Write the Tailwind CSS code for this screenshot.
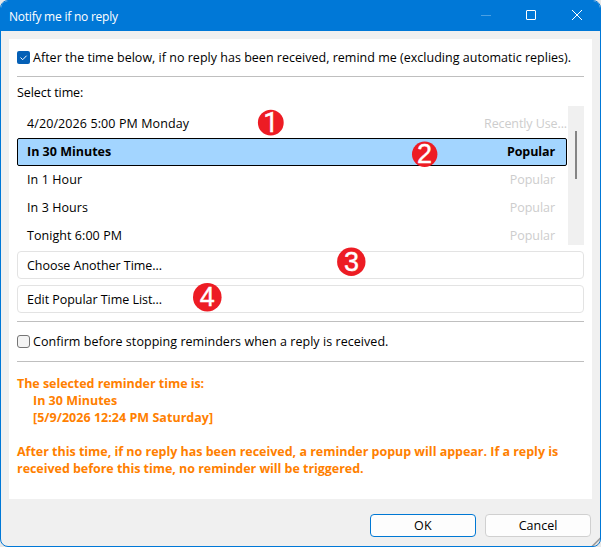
<!DOCTYPE html>
<html lang="en">
<head>
<meta charset="utf-8">
<title>Notify me if no reply</title>
<script src="https://cdn.jsdelivr.net/npm/@tailwindcss/browser@4"></script>
</head>
<body class="bg-[#e8e8e8] overflow-hidden">
<div class="relative flex h-[547px] w-[601px] flex-col overflow-hidden rounded-[8px] border border-[#0078d7] bg-[#f0f0f0] font-['Open_Sans','Noto_Sans',sans-serif] text-[12.5px] leading-[17px] text-black">
  <header class="flex h-[30px] shrink-0 items-center justify-between bg-[#0078d7] pl-2 text-white">
    <h1 class="text-[12px] tracking-[-0.23px]">Notify me if no reply</h1>
    <div class="flex">
      <svg class="h-[30px] w-[46px]" viewBox="0 0 46 30" fill="none" stroke="#4ba0e3"><path d="M19 14.5h10"/></svg>
      <svg class="h-[30px] w-[46px]" viewBox="0 0 46 30" fill="none" stroke="white"><rect x="18.5" y="9.5" width="9" height="9" rx="0.5"/></svg>
      <svg class="h-[30px] w-[46px]" viewBox="0 0 46 30" fill="none" stroke="white"><path d="M18 9l10 10M28 9l-10 10"/></svg>
    </div>
  </header>

  <main class="mx-2 mt-2 flex h-[460px] w-[583px] shrink-0 flex-col bg-white pl-2 pr-2">
    <label class="flex h-[37px] shrink-0 items-center gap-[3px]">
      <svg class="size-[13px]" viewBox="0 0 13 13"><rect width="13" height="13" rx="2" fill="#0560b6"/><path d="M3.5 6.6l2.2 2.1L9.6 4.7" fill="none" stroke="white" stroke-width="1"/></svg>
      <span class="whitespace-nowrap tracking-[0.015px]">After the time below, if no reply has been received, remind me (excluding automatic replies).</span>
    </label>
    <div class="h-px shrink-0 bg-[#bfbfbf]"></div>
    <div class="flex h-[29px] shrink-0 items-center pb-[3px] pt-1 tracking-[-0.08px]">Select time:</div>

    <div class="flex h-[139px] shrink-0 justify-between">
      <ul class="w-[550px] pt-1">
        <li class="flex h-7 items-center justify-between pb-[2px] pl-[10px]"><span class="tracking-[0.1px]">4/20/2026 5:00 PM Monday</span><span class="tracking-[-0.1px] text-[#cdcdcd]">Recently Use...</span></li>
        <li class="flex h-7 items-center justify-between rounded-[2px] border border-black bg-[#a3d5ff] pb-[2px] pl-[9px] pr-[11px] font-bold"><span>In 30 Minutes</span><span class="tracking-[-0.1px]">Popular</span></li>
        <li class="flex h-7 items-center justify-between pb-[2px] pl-[10px] pr-3"><span class="tracking-[0.1px]">In 1 Hour</span><span class="tracking-[-0.05px] text-[#cdcdcd]">Popular</span></li>
        <li class="flex h-7 items-center justify-between pb-[2px] pl-[10px] pr-3"><span class="tracking-[0.08px]">In 3 Hours</span><span class="tracking-[-0.05px] text-[#cdcdcd]">Popular</span></li>
        <li class="flex h-7 items-center justify-between pb-[2px] pl-[10px] pr-3"><span class="tracking-[0.06px]">Tonight 6:00 PM</span><span class="tracking-[-0.05px] text-[#cdcdcd]">Popular</span></li>
      </ul>
      <div class="flex w-4 justify-center bg-[#f0f0f0] pt-[25px]"><div class="h-12 w-[2px] bg-[#858585]"></div></div>
    </div>

    <div class="mt-[6px] flex shrink-0 flex-col gap-[6px]">
      <button class="flex h-7 items-center rounded-[4px] border border-[#e3e3e3] pl-[9px] tracking-[-0.04px]">Choose Another Time...</button>
      <button class="flex h-7 items-center rounded-[4px] border border-[#e3e3e3] pl-[9px] tracking-[-0.04px]">Edit Popular Time List...</button>
    </div>
    <div class="mt-2 h-px shrink-0 bg-[#bfbfbf]"></div>
    <label class="flex h-[39px] shrink-0 items-center gap-[3px]">
      <span class="size-[13px] rounded-[3px] border border-[#757575] bg-[#f4f4f4]"></span>
      <span class="tracking-[0.05px]">Confirm before stopping reminders when a reply is received.</span>
    </label>
    <div class="h-px shrink-0 bg-[#bfbfbf]"></div>

    <div class="whitespace-nowrap pt-[13px] font-bold text-[#ff8000]">
      <p class="tracking-[-0.05px]">The selected reminder time is:</p>
      <p class="pl-4">In 30 Minutes</p>
      <p class="pl-4 tracking-[0.03px]">[5/9/2026 12:24 PM Saturday]</p>
      <p class="pt-[17px] tracking-[-0.02px]">After this time, if no reply has been received, a reminder popup will appear. If a reply is</p>
      <p class="tracking-[-0.04px]">received before this time, no reminder will be triggered.</p>
    </div>
  </main>

  <footer class="flex justify-end gap-[9px] pr-[9px] pt-[15px]">
    <button class="h-[23px] w-[106px] rounded-[4px] border border-[#0078d4] bg-[#fdfdfd] leading-[21px] tracking-[0.3px]">OK</button>
    <button class="h-[23px] w-[106px] rounded-[4px] border border-[#d0d0d0] bg-[#fdfdfd] leading-[21px]">Cancel</button>
  </footer>

  <svg class="absolute -bottom-px -right-px size-[10px]" viewBox="0 0 10 10" fill="none" stroke="#9a9a9a" stroke-width="1.6"><path d="M1 9.5L9.5 1"/><path d="M5 9.5L9.5 5"/></svg>

  <svg class="pointer-events-none absolute -left-px -top-px h-[547px] w-[601px]" viewBox="0 0 601 547" font-family="Liberation Sans, Arial, sans-serif" font-size="27" fill="white" stroke="white" stroke-width="0.4" text-anchor="middle">
    <g fill="#ed1c24" stroke="none"><circle cx="270.8" cy="122.7" r="12.9"/><circle cx="424.7" cy="154.3" r="12.7"/><circle cx="351.3" cy="261.7" r="14.2"/><circle cx="207.3" cy="297.2" r="14.3"/></g>
    <text x="270.8" y="132" font-family="Roboto, sans-serif">1</text><text x="424.5" y="163">2</text><text x="351.5" y="271">3</text><text x="207.2" y="305.7">4</text>
  </svg>
</div>
</body>
</html>
